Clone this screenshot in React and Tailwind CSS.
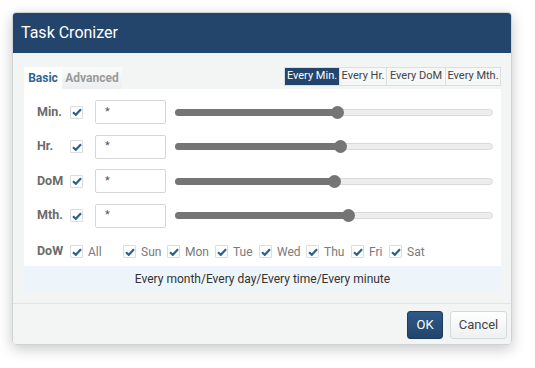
import React from 'react';

const font = { fontFamily: 'Roboto, "Open Sans", sans-serif' };

const rows = [
  { label: 'Min.', pct: 51 },
  { label: 'Hr.', pct: 52 },
  { label: 'DoM', pct: 50 },
  { label: 'Mth.', pct: 54.5 },
];

const days = [
  { d: 'Sun', w: 'w-[44px]' },
  { d: 'Mon', w: 'w-[48px]' },
  { d: 'Tue', w: 'w-[44px]' },
  { d: 'Wed', w: 'w-[47px]' },
  { d: 'Thu', w: 'w-[45px]' },
  { d: 'Fri', w: 'w-[38px]' },
  { d: 'Sat', w: 'w-[40px]' },
];

function Check() {
  return (
    <span className="w-[13px] h-[13px] shrink-0 bg-white border border-[#dcdcdc] rounded-[1px] flex items-center justify-center">
      <svg width="10" height="8" viewBox="0 0 10 8">
        <path d="M1 4.2 L3.8 6.8 L9 1.3" fill="none" stroke="#2a628f" strokeWidth="2.2" />
      </svg>
    </span>
  );
}

function Slider({ pct }) {
  return (
    <div className="relative flex-1 h-[13px] flex items-center">
      <div className="w-full h-[7px] rounded-full bg-[#ededed] border border-[#d9d9d9]" />
      <div
        className="absolute left-0 top-[3px] h-[7px] rounded-full bg-[#757575]"
        style={{ width: pct + '%' }}
      />
      <div
        className="absolute top-0 w-[13px] h-[13px] -ml-[6px] rounded-full bg-[#757575]"
        style={{ left: pct + '%' }}
      />
    </div>
  );
}

const modes = [
  { label: 'Every Min.', w: 'w-[54px]', active: true },
  { label: 'Every Hr.', w: 'w-[47px]' },
  { label: 'Every DoM', w: 'w-[59px]' },
  { label: 'Every Mth.', w: 'w-[55px]' },
];

export default function App() {
  return (
    <div className="w-[535px] h-[368px] bg-white pt-[12px] pl-[12px]" style={font}>
      <div className="w-[500px] h-[333px] rounded-[4px] overflow-hidden flex flex-col border border-[#cfd3d6] shadow-[0_4px_14px_rgba(0,0,0,0.22)]">

        {/* Header */}
        <div className="h-[40px] shrink-0 bg-[#23446b] px-[8px] flex items-center text-white text-[16px]">
          Task Cronizer
        </div>

        {/* Body */}
        <div className="flex-1 bg-[#f3f4f4] flex flex-col">
          <div className="pt-[14px] pl-[11px] pr-[10px]">
            <div className="flex justify-between items-start h-[22px]">
              <div className="flex h-[22px] text-[12px] font-bold">
                <div className="w-[38px] bg-white text-[#2b6595] flex items-center justify-center">Basic</div>
                <div className="w-[60px] bg-gradient-to-b from-[#fafbfb] to-[#eceeef] text-[#9a9a9a] flex items-center justify-center">Advanced</div>
              </div>
              <div className="flex h-[19px] text-[11px] border border-[#dcdfe1]">
                {modes.map((m, i) => (
                  <div
                    key={m.label}
                    className={`${m.w} flex items-center justify-center ${i > 0 ? 'border-l border-[#dcdfe1]' : ''} ${
                      m.active ? 'bg-[#23446b] text-white' : 'bg-[#f6f7f7] text-[#444]'
                    }`}
                  >
                    {m.label}
                  </div>
                ))}
              </div>
            </div>

            {/* Panel */}
            <div className="bg-white pt-[11px] pl-[13px] pr-[8px] pb-[2px] flex flex-col gap-[10.5px]">
              {rows.map((r) => (
                <div key={r.label} className="flex items-center h-[24px]">
                  <span className="w-[33px] text-[12.5px] font-bold text-[#6b6b6b]">{r.label}</span>
                  <Check />
                  <div className="ml-[12px] w-[71px] h-[24px] border border-[#d6d6d6] rounded-[2px] flex items-center pl-[9px] text-[11px] text-[#555]">
                    *
                  </div>
                  <div className="ml-[9px] flex-1 flex">
                    <Slider pct={r.pct} />
                  </div>
                </div>
              ))}
              <div className="flex items-center h-[24px] mt-[1.5px] text-[12px]">
                <span className="w-[33px] font-bold text-[12.5px] text-[#6b6b6b]">DoW</span>
                <Check />
                <span className="ml-[5px] w-[35px] text-[#7a7a7a]">All</span>
                <div className="flex">
                  {days.map((x) => (
                    <div key={x.d} className={`${x.w} flex items-center gap-[5px]`}>
                      <Check />
                      <span className="text-[#7a7a7a]">{x.d}</span>
                    </div>
                  ))}
                </div>
              </div>
            </div>

            {/* Summary */}
            <div className="h-[26px] bg-[#eef5fa] flex items-center justify-center text-[12px] text-[#333]">
              Every month/Every day/Every time/Every minute
            </div>
          </div>

          {/* Footer */}
          <div className="mt-auto h-[41px] border-t border-[#e1e3e4] flex items-center justify-end gap-[7px] pr-[4px] pt-[1px]">
            <button className="w-[36px] h-[28px] rounded-[3px] bg-gradient-to-b from-[#2f5a88] to-[#23446b] border border-[#1d3a5c] text-white text-[13px]">
              OK
            </button>
            <button className="w-[57px] h-[28px] rounded-[3px] bg-gradient-to-b from-white to-[#eef0f1] border border-[#d6d9db] text-[#444] text-[13px]">
              Cancel
            </button>
          </div>
        </div>
      </div>
    </div>
  );
}
